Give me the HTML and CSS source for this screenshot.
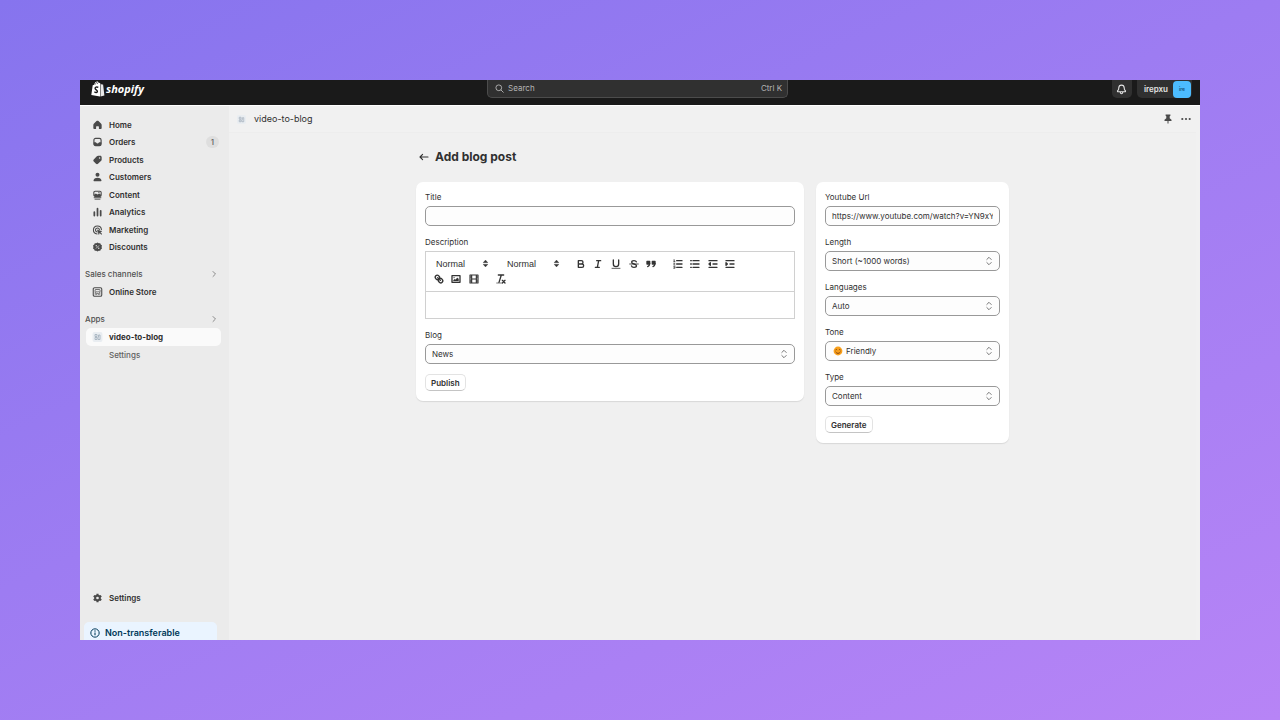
FILE: index.html
```html
<!DOCTYPE html>
<html lang="en">
<head>
<meta charset="utf-8">
<title>video-to-blog</title>
<link rel="stylesheet" href="styles.css">
</head>
<body>
<svg class="defs" aria-hidden="true">
  <symbol id="updown" viewBox="0 0 8 10"><path d="M1.800 3.500 4 1.300l2.200 2.200M1.800 6.500 4 8.700l2.200-2.200" fill="none" stroke="currentColor" stroke-width="1" stroke-linecap="round" stroke-linejoin="round"/></symbol>
  <symbol id="carets" viewBox="0 0 18 18"><path d="M5.500 7.500 9 3.500l3.500 4zM5.500 10.500 9 14.500l3.500-4z" fill="currentColor" stroke="currentColor"/></symbol>
  <symbol id="right" viewBox="0 0 8 8"><path d="m3 1.500 2.500 2.500L3 6.500" fill="none" stroke="currentColor" stroke-linecap="round" stroke-linejoin="round"/></symbol>
  <symbol id="app" viewBox="0 0 10 10"><rect width="10" height="10" rx="2" fill="#e9edf1"/><path d="M2.500 2.500h2v2h-2zM2.500 5.500h2v2h-2zM6 3h1.500v4.500H5.500V5H6z" fill="none" stroke="#9aa7b4" stroke-width=".7"/></symbol>
</svg>
<div class="window">
  <header class="topbar">
    <a class="logo" href="#">
      <svg viewBox="0 0 14 16" width="14" height="16"><path d="M1.700 4.300 3.200 3.800C3.600 1.700 4.900.5 6.200.5c.7 0 1.100.5 1.300 1.200L9 2v13.500L.3 13.900z" fill="#fff"/><path d="m9.500 2.200 1.100 1.200 1.500.2 1.300 11-3.900.9z" fill="#e9e9e9"/><path d="M4.200 3.600C4.600 2.300 5.300 1.500 6 1.400c.4.1.6.8.6 1.600" fill="none" stroke="#1a1a1a" stroke-width=".6"/><path d="M7.300 6.300C5.600 5.500 4 6.200 4.100 7.400c.1 1.400 2.500 1.600 2.300 3.100-.1 1.300-1.800 1.300-3 .3" fill="none" stroke="#1a1a1a" stroke-width="1.400"/></svg>
      <span>shopify</span>
    </a>
    <button class="search" type="button">
      <svg viewBox="0 0 10 10" width="9" height="9"><circle cx="4.200" cy="4.200" r="3.200" fill="none" stroke="currentColor"/><path d="m6.700 6.700 2.500 2.500" stroke="currentColor" stroke-linecap="round"/></svg>
      <span>Search</span><span class="shortcut">Ctrl K</span>
    </button>
    <div class="account">
      <button class="bell" type="button" aria-label="Notifications"><svg viewBox="0 0 12 12" width="11" height="11"><path d="M6 1.200C4 1.200 3.100 2.600 3 4.300L2.800 6 1.700 7.500c-.3.500 0 1 .5 1h7.600c.5 0 .8-.5.500-1L9.200 6 9 4.300C8.900 2.600 8 1.200 6 1.200zM4.600 9c.2 1.200.7 1.700 1.400 1.700S7.200 10.200 7.400 9" fill="none" stroke="currentColor" stroke-width="1.200" stroke-linejoin="round"/></svg></button>
      <button class="user" type="button"><span>irepxu</span><span class="avatar">ire</span></button>
    </div>
  </header>
  <div class="body">
    <aside class="sidebar">
      <nav>
        <ul class="menu">
          <li><a href="#"><svg viewBox="0 0 12 12"><path d="M6 .8c.5 0 .8.200 1.200.5l3 2.800c.5.500.8 1 .8 1.700v3.700c0 .8-.6 1.400-1.400 1.400H7.700V8.200c0-.4-.3-.7-.7-.7H5c-.4 0-.7.300-.7.700v2.700H2.400C1.600 10.900 1 10.300 1 9.500V5.800c0-.7.300-1.200.8-1.700l3-2.800c.4-.3.700-.5 1.200-.5z" fill="currentColor"/></svg>Home</a></li>
          <li><a href="#"><svg viewBox="0 0 12 12"><rect x="1.700" y="1.700" width="8.600" height="8.600" rx="2" fill="none" stroke="currentColor" stroke-width="1.400"/><path d="M1.500 6.300h2.300c.4 0 .6.300.8.7.3.6.7.8 1.400.8s1.100-.2 1.400-.8c.2-.4.400-.7.800-.7h2.300v2.200c0 1.200-.9 2-2 2h-5c-1.100 0-2-.8-2-2z" fill="currentColor"/></svg>Orders<span class="count">1</span></a></li>
          <li><a href="#"><svg viewBox="0 0 12 12"><path fill-rule="evenodd" d="M6.700 1h2.500C10.300 1 11 1.700 11 2.800v2.500c0 .6-.2 1.100-.6 1.500L6.600 10.500c-.7.700-1.700.7-2.400 0L1.500 7.800c-.7-.7-.7-1.700 0-2.400l3.700-3.800c.4-.4.900-.6 1.500-.6zM8.500 2.700a.9.900 0 1 0 0 1.800.9.900 0 0 0 0-1.800z" fill="currentColor"/></svg>Products</a></li>
          <li><a href="#"><svg viewBox="0 0 12 12"><circle cx="6" cy="3.400" r="2.400" fill="currentColor"/><path d="M1.300 9.500C2 7.700 3.800 6.800 6 6.800s4 .9 4.700 2.700c.3.800-.3 1.500-1.100 1.500H2.400c-.8 0-1.400-.7-1.100-1.500z" fill="currentColor"/></svg>Customers</a></li>
          <li><a href="#"><svg viewBox="0 0 12 12"><rect x="1.600" y="1.400" width="8.800" height="6.200" rx="1.600" fill="none" stroke="currentColor" stroke-width="1.300"/><path d="M1.800 5.600 4 4.200l2 1.300 2-1.300 2.300 1.600v1.700H1.800z" fill="currentColor"/><circle cx="7.700" cy="3.100" r=".8" fill="currentColor"/><path d="M1.500 9.200h9M2.500 11h7" stroke="currentColor" stroke-width="1.100"/></svg>Content</a></li>
          <li><a href="#"><svg viewBox="0 0 12 12"><path d="M2.200 6.200v4M6 2v8.200M9.800 4.500v5.700" stroke="currentColor" stroke-width="2.100" stroke-linecap="round"/></svg>Analytics</a></li>
          <li><a href="#"><svg viewBox="0 0 12 12"><path d="M10.700 5.500A4.800 4.800 0 1 0 5.500 10.700M8.300 5.500A2.400 2.400 0 1 0 5.500 8.300" fill="none" stroke="currentColor" stroke-width="1.300" stroke-linecap="round"/><path d="m5.800 5.800 5.500 1.900-2 1 2 2-.8.700-2-2-1 2z" fill="currentColor" stroke="currentColor" stroke-width=".5" stroke-linejoin="round"/></svg>Marketing</a></li>
          <li><a href="#"><svg viewBox="0 0 12 12"><path d="m6 .5 1.500 1 1.800-.1.600 1.700 1.500 1L10.900 6l.5 1.900-1.500 1-.6 1.700-1.800-.1-1.500 1-1.500-1-1.800.1-.6-1.700-1.500-1L1.100 6 .6 4.100l1.500-1 .6-1.700 1.800.1z" fill="currentColor"/><path d="m4.200 7.800 3.600-3.600" stroke="#ebebeb" stroke-width=".9"/><circle cx="4.500" cy="4.500" r=".8" fill="#ebebeb"/><circle cx="7.500" cy="7.500" r=".8" fill="#ebebeb"/></svg>Discounts</a></li>
        </ul>
        <h2 class="section">Sales channels<svg><use href="#right"/></svg></h2>
        <a class="item" href="#"><svg viewBox="0 0 12 12"><rect x=".9" y=".9" width="10.200" height="10.200" rx="1.600" fill="none" stroke="currentColor" stroke-width="1.300"/><path d="M3.400 3h5.200l.8 2.100c-.3 1-1.400 1-1.800.2-.5.900-1.700.9-2.200 0-.4.900-2.200.9-2.500-.2zM3.300 6v3.400M8.700 6v3.400M4.900 9.400V7.600h2.200v1.800" fill="none" stroke="currentColor" stroke-width=".9"/></svg>Online Store</a>
        <h2 class="section">Apps<svg><use href="#right"/></svg></h2>
        <a class="item current" href="#"><svg><use href="#app"/></svg>video-to-blog</a>
        <a class="item sub" href="#">Settings</a>
      </nav>
      <div class="foot">
        <a class="item" href="#"><svg viewBox="0 0 12 12"><g stroke="currentColor" stroke-width="2.600"><path d="M6 .8v10.400M1.500 3.400l9 5.200M1.500 8.600l9-5.200"/></g><circle cx="6" cy="6" r="4" fill="currentColor"/><circle cx="6" cy="6" r="1.600" fill="#ebebeb"/></svg>Settings</a>
        <p class="notice"><svg viewBox="0 0 12 12" width="10" height="10"><circle cx="6" cy="6" r="5" fill="none" stroke="currentColor" stroke-width="1.200"/><path d="M6 5.300V8.800" stroke="currentColor" stroke-width="1.300"/><circle cx="6" cy="3.600" r=".8" fill="currentColor"/></svg>Non-transferable</p>
      </div>
    </aside>
    <main class="main">
      <div class="appbar">
        <svg width="9" height="9"><use href="#app"/></svg><span>video-to-blog</span>
        <button type="button" aria-label="Pin"><svg viewBox="0 0 10 10" width="10" height="10"><path d="M2.600.5h4.800v1.200l-.7.500v2l1.800 1.500v1.200H5.500V9.500h-1V6.900h-3V5.700l1.800-1.500v-2l-.7-.5z" fill="currentColor"/></svg></button>
        <button type="button" aria-label="More"><svg viewBox="0 0 10 10" width="10" height="10"><g fill="currentColor"><circle cx="1.300" cy="5" r="1.100"/><circle cx="5" cy="5" r="1.100"/><circle cx="8.700" cy="5" r="1.100"/></g></svg></button>
      </div>
      <div class="page">
        <div class="heading">
          <a href="#" aria-label="Back"><svg viewBox="0 0 10 10" width="10" height="10"><path d="M9 5H1.200M3.600 2.400 1 5l2.600 2.600" fill="none" stroke="currentColor" stroke-width="1.100" stroke-linecap="round" stroke-linejoin="round"/></svg></a>
          <h1>Add blog post</h1>
        </div>
        <div class="columns">
          <form class="card">
            <div class="field"><label for="title">Title</label><input class="control" id="title" type="text"></div>
            <div class="field"><label for="description">Description</label>
              <div class="editor">
                <div class="toolbar">
                  <div class="picker"><select aria-label="Font"><option>Normal</option></select><svg><use href="#carets"/></svg></div>
                  <div class="picker"><select aria-label="Size"><option>Normal</option></select><svg><use href="#carets"/></svg></div>
                  <div class="tools">
                    <button type="button" aria-label="Bold"><svg viewBox="0 0 18 18"><path d="M5 4h4.500a2.500 2.500 0 0 1 0 5H5zM5 9h5.500a2.500 2.500 0 0 1 0 5H5z"/></svg></button>
                    <button type="button" aria-label="Italic"><svg viewBox="0 0 18 18"><path d="M7 4h6M5 14h6M8 14l2-10"/></svg></button>
                    <button type="button" aria-label="Underline"><svg viewBox="0 0 18 18"><path d="M5 3v6a4 4 0 0 0 8 0V3"/><path d="M3 15.500h12" stroke-width="1.200"/></svg></button>
                    <button type="button" aria-label="Strike"><svg viewBox="0 0 18 18"><path d="M2.500 9h13" stroke-width="1.300"/><path d="M12.500 5.700C12 4.500 10.700 4 9 4 6.800 4 5.500 5 5.500 6.500 5.500 8 7 8.500 9 9s3.700 1 3.700 2.700C12.700 13.200 11.200 14 9 14s-3.500-.8-3.800-2.200"/></svg></button>
                    <button type="button" aria-label="Quote"><svg viewBox="0 0 18 18"><path class="solid" d="M3 5h4v4H3zM11 5h4v4h-4z"/><path d="M7 8c0 4.031-3 5-3 5M15 8c0 4.031-3 5-3 5"/></svg></button>
                  </div>
                  <div class="tools">
                    <button type="button" aria-label="Numbered list"><svg viewBox="0 0 18 18"><path d="M7 4h8M7 9h8M7 14h8"/><path d="M2.500 5.500h2M3.500 5.500v-3l-1 .4M2.500 8h2L2.500 10.500h2M2.500 12.500h2v3h-2M3 14h1.500" stroke-width="1"/></svg></button>
                    <button type="button" aria-label="Bullet list"><svg viewBox="0 0 18 18"><path d="M6 4h9M6 9h9M6 14h9M2.500 4h1M2.500 9h1M2.500 14h1"/></svg></button>
                    <button type="button" aria-label="Outdent"><svg viewBox="0 0 18 18"><path d="M3 14h12M3 4h12M9 9h6"/><path class="solid" d="M5 7v4L3 9z"/></svg></button>
                    <button type="button" aria-label="Indent"><svg viewBox="0 0 18 18"><path d="M3 14h12M3 4h12M9 9h6"/><path class="solid" d="M3 7v4l2-2z"/></svg></button>
                  </div>
                  <div class="tools">
                    <button type="button" aria-label="Link"><svg viewBox="0 0 18 18"><path d="m7 7 4 4M8.900 4.577a3.476 3.476 0 0 1 .36 4.679A3.476 3.476 0 0 1 4.577 8.900C3.185 7.500 2.035 6.400 4.217 4.217S7.500 3.185 8.900 4.577zM13.423 9.100a3.476 3.476 0 0 0-4.679-.36 3.476 3.476 0 0 0 .36 4.679c1.392 1.392 2.500 2.542 4.679.36s1.032-3.283-.36-4.679z"/></svg></button>
                    <button type="button" aria-label="Image"><svg viewBox="0 0 18 18"><path d="M3 4h12v10H3z"/><circle class="solid" cx="6" cy="7" r=".7" stroke-width=".3"/><path class="solid" d="M5 12v-1l2-2 1 1 3-3 2 2v3z" stroke-width=".3"/></svg></button>
                    <button type="button" aria-label="Video"><svg viewBox="0 0 18 18"><path d="M3 3h12v12H3zM5.500 3v12M12.500 3v12M5 9h8M3 6h2M3 12h2M13 6h2M13 12h2" stroke-width="1.700"/></svg></button>
                  </div>
                  <div class="tools">
                    <button type="button" aria-label="Clear formatting"><svg viewBox="0 0 18 18"><path d="M5 3h8M6 14 9.500 3M11 11l4 4M15 11l-4 4"/><path d="M2.500 15h7" stroke-width="1"/></svg></button>
                  </div>
                </div>
                <textarea id="description" rows="1"></textarea>
              </div>
            </div>
            <div class="field"><label for="blog">Blog</label><div class="choice"><select class="control" id="blog"><option>News</option></select><svg><use href="#updown"/></svg></div></div>
            <button class="action" type="button">Publish</button>
          </form>
          <form class="card">
            <div class="field"><label for="url">Youtube Url</label><input class="control" id="url" type="text" value="https://www.youtube.com/watch?v=YN9xYzQmKw"></div>
            <div class="field"><label for="length">Length</label><div class="choice"><select class="control" id="length"><option>Short (~1000 words)</option></select><svg><use href="#updown"/></svg></div></div>
            <div class="field"><label for="languages">Languages</label><div class="choice"><select class="control" id="languages"><option>Auto</option></select><svg><use href="#updown"/></svg></div></div>
            <div class="field"><label for="tone">Tone</label><div class="choice"><select class="control with-face" id="tone"><option>Friendly</option></select>
              <svg class="face" viewBox="0 0 10 10"><circle cx="5" cy="5" r="4.400" fill="#f9a01b"/><path d="M2.500 4q.8-1 1.600 0M5.900 4q.8-1 1.600 0M2.500 5.800q2.500 3.200 5 0" fill="none" stroke="#7a3b10" stroke-width=".9"/></svg>
              <svg><use href="#updown"/></svg></div></div>
            <div class="field"><label for="type">Type</label><div class="choice"><select class="control" id="type"><option>Content</option></select><svg><use href="#updown"/></svg></div></div>
            <button class="action" type="button">Generate</button>
          </form>
        </div>
      </div>
    </main>
  </div>
</div>
</body>
</html>
```
FILE: styles.css
```css
* { box-sizing: border-box; }
body {
  margin: 0;
  min-height: 100vh;
  padding: 80px;
  display: flex;
  background: linear-gradient(155deg, #8674ee 0%, #9d7cf2 45%, #b784f6 100%);
  font-family: Inter, "Liberation Sans", sans-serif;
  font-size: 8px;
  line-height: 12px;
  color: #303030;
}
button, input, select, textarea { font: inherit; color: inherit; margin: 0; }
button { border: 0; padding: 0; background: none; }
a { color: inherit; text-decoration: none; }
h1, h2, p, ul { margin: 0; padding: 0; }
svg { display: block; flex: none; }
.defs { position: absolute; width: 0; height: 0; }

.window { flex: 1; min-width: 0; display: flex; flex-direction: column; background: #f0f0f0; }

.topbar {
  display: grid;
  grid-template-columns: 49fr 301px 50fr;
  column-gap: 12px;
  height: 26px;
  padding: 0 8px 0 11px;
  background: #1a1a1a;
  border-bottom: 1px solid #fff;
  align-items: start;
}
.logo {
  display: flex;
  align-items: center;
  gap: 1px;
  height: 17px;
  color: #fff;
  font: italic 700 11px/16px "Open Sans", sans-serif;
}
.search {
  display: flex;
  align-items: center;
  gap: 4px;
  height: 18px;
  padding: 0 5px 1px 7px;
  background: #303030;
  border: 1px solid #4c4c4c;
  border-top: 0;
  border-radius: 0 0 5px 5px;
  color: #b5b5b5;
}
.shortcut { margin-left: auto; }
.account { display: flex; justify-content: flex-end; gap: 5px; color: #e3e3e3; }
.bell, .user {
  display: flex;
  align-items: center;
  height: 18px;
  background: #303030;
  border-radius: 0 0 5px 5px;
}
.bell { width: 20px; justify-content: center; }
.user { padding: 0 1px 0 7px; gap: 5px; font-weight: 600; }
.avatar {
  display: flex;
  align-items: center;
  justify-content: center;
  width: 18px;
  height: 17px;
  border-radius: 4px;
  background: #4cbcff;
  color: #14507a;
  font-size: 5px;
}

.body { flex: 1; display: flex; }
.sidebar {
  width: 149px;
  flex: none;
  display: flex;
  flex-direction: column;
  justify-content: space-between;
  background: #ebebeb;
  padding-top: 10px;
  font-weight: 600;
}
.menu { list-style: none; display: grid; grid-auto-rows: 1fr; height: 140px; }
.menu a, .item {
  display: flex;
  align-items: center;
  gap: 6px;
  height: 100%;
  padding: 0 10px 0 12px;
}
.menu svg, .item svg { width: 11px; height: 10px; color: #4a4a4a; }
.count {
  margin-left: auto;
  padding: 0 5px;
  border-radius: 6px;
  background: #dedede;
  font-weight: 500;
  color: #616161;
}
.section {
  display: flex;
  justify-content: space-between;
  align-items: center;
  margin-top: 12px;
  padding: 0 11px 0 5px;
  font-size: 8px;
  font-weight: 500;
  color: #505050;
}
.section svg { width: 8px; height: 8px; color: #8a8a8a; }
.item { height: 18px; }
.section + .item { margin-top: 3px; }
.item.current {
  margin: 3px 8px 0 6px;
  padding-left: 6px;
  border-radius: 5px;
  background: #fafafa;
  font-weight: 700;
}
.item.sub { padding-left: 29px; font-weight: 500; color: #616161; }
.foot .item { margin-bottom: 15px; }
.notice {
  display: flex;
  align-items: center;
  gap: 5px;
  margin: 0 12px 0 4px;
  padding: 5px 6px 1px;
  background: #eaf4ff;
  border-radius: 5px 5px 0 0;
  color: #003a5a;
  font-size: 9px;
}

.main { flex: 1; min-width: 0; border-right: 4px solid #f1f1f1; }
.appbar {
  display: flex;
  align-items: center;
  gap: 8px;
  height: 27px;
  padding: 0 5px 0 8px;
  background: #f1f1f1;
  border-bottom: 1px solid #ededed;
  font-size: 9px;
}
.appbar span { flex: 1; }
.appbar button { color: #4a4a4a; }
.page { max-width: 593px; margin: 0 auto; padding: 16px 0; }
.heading { display: flex; align-items: center; gap: 6px; padding-left: 3px; margin-bottom: 17px; }
h1 { font-size: 12px; line-height: 16px; font-weight: 700; }
.columns { display: grid; grid-template-columns: minmax(0, 1fr) 193px; gap: 12px; align-items: start; }
.card {
  min-width: 0;
  display: flex;
  flex-direction: column;
  align-items: stretch;
  gap: 10px;
  padding: 9px 9px 10px;
  background: #fff;
  border-radius: 7px;
  box-shadow: 0 1px 1px #d8d8d8;
}
.field { display: flex; flex-direction: column; gap: 3px; }
.control {
  display: block;
  width: 100%;
  height: 20px;
  padding: 0 6px;
  border: 1px solid #999;
  border-radius: 5px;
  background: #fdfdfd;
  appearance: none;
}
.choice, .picker { position: relative; }
.choice svg { position: absolute; right: 7px; top: 5px; width: 8px; height: 10px; color: #777; pointer-events: none; }
.choice .face { left: 8px; right: auto; width: 10px; }
.control.with-face { padding-left: 20px; }
.action {
  align-self: flex-start;
  height: 17px;
  padding: 0 5px;
  border: 1px solid #e3e3e3;
  border-bottom-color: #c4c4c4;
  border-radius: 5px;
  background: #fff;
  font-weight: 600;
}

.editor { border: 1px solid #d0d0d0; }
.toolbar {
  display: flex;
  flex-wrap: wrap;
  column-gap: 9px;
  padding: 4px 4px 5px;
  border-bottom: 1px solid #d0d0d0;
}
.tools { display: grid; grid-auto-flow: column; grid-auto-columns: 1fr; }
.tools:nth-child(3) { width: 88px; }
.tools:nth-child(4) { width: 70px; }
.tools:nth-child(5) { width: 53px; }
.tools:nth-child(6) { width: 18px; }
.tools button { display: flex; align-items: center; justify-content: center; height: 15px; }
.tools svg { width: 12px; height: 12px; fill: none; stroke: #333; stroke-width: 2; stroke-linecap: round; stroke-linejoin: round; }
.tools .solid { fill: #333; }
.picker { width: 62px; }
.picker select {
  display: block;
  width: 100%;
  height: 15px;
  padding: 0 6px;
  border: 0;
  background: none;
  appearance: none;
  font-family: "Liberation Sans", sans-serif;
  font-size: 9px;
}
.picker svg { position: absolute; right: 1px; top: 2px; width: 11px; height: 11px; color: #333; pointer-events: none; }
textarea { display: block; width: 100%; height: 26px; padding: 7px; border: 0; background: none; resize: none; }
```
